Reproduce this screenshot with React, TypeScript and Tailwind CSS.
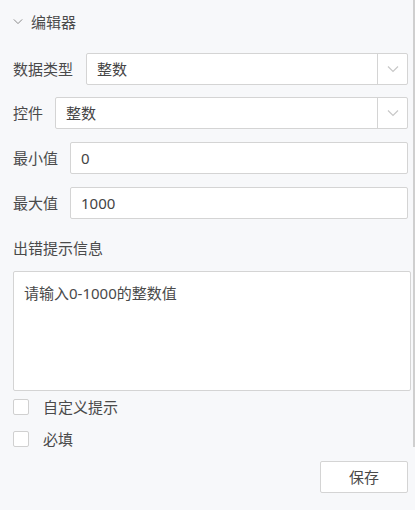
import React from "react";

const Chevron = ({ className }: { className?: string }) => (
  <svg className={className} width="12" height="8" viewBox="0 0 12 8" fill="none">
    <path d="M1 1.5L6 6.5L11 1.5" stroke="currentColor" strokeWidth="1.2" />
  </svg>
);

const Select = ({ value }: { value: string }) => (
  <div className="flex-1 h-8 flex bg-white border border-[#d4d4d4] rounded-[2px]">
    <div className="flex-1 flex items-center pl-[10px] text-[15px] text-[#444]">{value}</div>
    <div className="w-[30px] border-l border-[#d4d4d4] flex items-center justify-center text-[#c8c8c8]">
      <Chevron />
    </div>
  </div>
);

const Input = ({ value }: { value: string }) => (
  <div className="flex-1 h-8 flex items-center bg-white border border-[#d4d4d4] rounded-[2px] pl-[10px] text-[15px] text-[#444]">
    {value}
  </div>
);

const Checkbox = ({ label }: { label: string }) => (
  <div className="flex items-center h-4">
    <div className="w-4 h-4 bg-white border border-[#d0d0d0] rounded-[2px]" />
    <span className="ml-[14px] text-[15px] text-[#4a4a4a]">{label}</span>
  </div>
);

export default function App() {
  return (
    <div
      className="relative w-[415px] h-[510px] bg-[#f7f8fa] overflow-hidden"
      style={{ fontFamily: '"Noto Sans", "Noto Sans CJK SC", sans-serif' }}
    >
      <div className="absolute right-0 top-0 w-[2px] h-[447px] bg-[#cfcfcf]" />
      <div className="pl-[13px] pr-[7px] flex flex-col">
        <div className="h-11 flex items-center text-[15px] text-[#4a4a4a]">
          <Chevron className="text-[#8a8a8a] w-[10px] h-[7px] mb-[1px]" />
          <span className="ml-[8px]">编辑器</span>
        </div>
        <div className="mt-[9px] flex items-center">
          <span className="w-[73px] text-[15px] text-[#4a4a4a]">数据类型</span>
          <Select value="整数" />
        </div>
        <div className="mt-[12px] flex items-center">
          <span className="w-[42px] text-[15px] text-[#4a4a4a]">控件</span>
          <Select value="整数" />
        </div>
        <div className="mt-[13px] flex items-center">
          <span className="w-[57px] text-[15px] text-[#4a4a4a]">最小值</span>
          <Input value="0" />
        </div>
        <div className="mt-[13px] flex items-center">
          <span className="w-[57px] text-[15px] text-[#4a4a4a]">最大值</span>
          <Input value="1000" />
        </div>
        <div className="mt-[19px] h-5 flex items-center text-[15px] text-[#4a4a4a]">出错提示信息</div>
        <div className="mt-[13px] mr-[-3px] h-[120px] bg-white border border-[#d4d4d4] rounded-[2px] px-[10px] pt-[11px] text-[15px] text-[#4a4a4a] leading-5">
          请输入0-1000的整数值
        </div>
        <div className="mt-[8px] flex flex-col gap-4">
          <Checkbox label="自定义提示" />
          <Checkbox label="必填" />
        </div>
        <div className="mt-[14px] flex justify-end">
          <div className="w-[88px] h-8 flex items-center justify-center bg-white border border-[#d4d4d4] rounded-[2px] text-[15px] text-[#4a4a4a]">
            保存
          </div>
        </div>
      </div>
    </div>
  );
}
